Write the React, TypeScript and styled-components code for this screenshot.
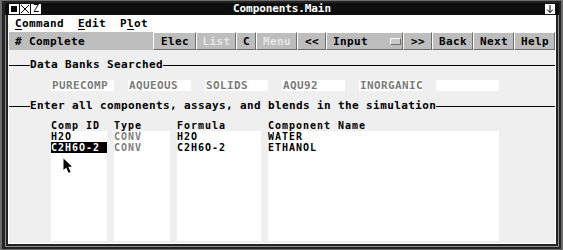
import styled, { createGlobalStyle } from "styled-components";

const MONO = `"DejaVu Sans Mono", "Liberation Mono", monospace`;

const GlobalStyle = createGlobalStyle`
  html, body { margin: 0; padding: 0; background: #ffffff; }
  body { font-family: ${MONO}; }
`;

const Window = styled.div`
  position: relative;
  box-sizing: border-box;
  width: 563px;
  height: 250px;
  display: flex;
  flex-direction: column;
  background: #232323;
  border: 2px solid #6c6c6c;
  border-top-width: 1px;
  border-bottom-width: 1px;
  padding: 2px 2px 2px 3px;
  font-family: ${MONO};
  font-weight: bold;
  font-size: 11px;
  letter-spacing: 0.38px;
  color: #000;
`;

const TitleBar = styled.div`
  height: 12px;
  background: #0e0e0e;
  display: grid;
  grid-template-columns: 1fr auto 1fr;
  align-items: center;
  padding: 0 4px;
`;

const TitleIcons = styled.div`
  display: flex;
  gap: 1px;
`;

const TitleIcon = styled.div`
  width: 10px;
  height: 10px;
  background: #ffffff;
  display: flex;
  align-items: center;
  justify-content: center;
  color: #000;
  font-size: 10px;
  line-height: 10px;
  letter-spacing: 0;
  font-weight: normal;
`;

const TitleText = styled.div`
  color: #ffffff;
  letter-spacing: -0.1px;
  line-height: 12px;
`;

const TitleRight = styled.div`
  display: flex;
  justify-content: flex-end;
`;

const Body = styled.div`
  flex: 1;
  display: flex;
  flex-direction: column;
  border: 1px solid #8c8c8c;
  border-top: none;
  padding: 0 2px 2px 2px;
  min-height: 0;
`;

const Client = styled.div`
  flex: 1;
  display: flex;
  flex-direction: column;
  border: 1px solid #ffffff;
  border-top: none;
  background: #efefef;
  min-height: 0;
`;

const MenuBar = styled.div`
  height: 17px;
  background: #ffffff;
  display: flex;
  align-items: center;
  gap: 14px;
  padding-left: 6px;
`;

const MenuItem = styled.span`
  line-height: 12px;
  u {
    text-decoration: underline;
    text-underline-offset: 2px;
    text-decoration-thickness: 1px;
  }
`;

const Toolbar = styled.div`
  height: 18px;
  box-sizing: border-box;
  background: #bdbdbd;
  display: flex;
  align-items: stretch;
`;

const ToolLabel = styled.div`
  flex: 1;
  padding-left: 6px;
  display: flex;
  align-items: center;
`;

const ToolButton = styled.div<{ $w: number; $disabled?: boolean; $left?: boolean }>`
  box-sizing: border-box;
  width: ${(p) => p.$w}px;
  display: flex;
  align-items: center;
  justify-content: ${(p) => (p.$left ? "space-between" : "center")};
  padding: ${(p) => (p.$left ? "0 1px 0 6px" : "0 0 0 1px")};
  border-top: 1px solid #ffffff;
  border-left: 1px solid #ffffff;
  border-right: 1px solid #6e6e6e;
  border-bottom: 1px solid #6e6e6e;
  color: ${(p) => (p.$disabled ? "#e6e6e6" : "#000")};
`;

const OptionMark = styled.span`
  width: 11px;
  height: 7px;
  box-sizing: border-box;
  border-top: 1px solid #ffffff;
  border-left: 1px solid #ffffff;
  border-right: 1px solid #6e6e6e;
  border-bottom: 1px solid #6e6e6e;
  background: #c8c8c8;
`;

const Content = styled.div`
  position: relative;
  flex: 1;
  display: flex;
  flex-direction: column;
  min-height: 0;
`;

const Rule = styled.div<{ $top: number }>`
  display: flex;
  align-items: center;
  height: 12px;
  margin-top: ${(p) => p.$top}px;
  &::before {
    content: "";
    width: 21px;
    height: 1px;
    background: #000;
  }
  &::after {
    content: "";
    flex: 1;
    height: 1px;
    background: #000;
  }
`;

const RuleText = styled.span`
  line-height: 12px;
`;

const BankRow = styled.div`
  display: flex;
  gap: 14px;
  margin: 9px 0 0 42px;
`;

const BankBox = styled.div`
  width: 63px;
  height: 11px;
  line-height: 11px;
  padding-left: 1px;
  box-sizing: border-box;
  background: #ffffff;
  color: #7b7b7b;
`;

const Table = styled.div`
  flex: 1;
  display: flex;
  gap: 7px;
  margin: 8px 0 2px 42px;
  min-height: 0;
  font-size: 10px;
  letter-spacing: 0.98px;
`;

const Column = styled.div<{ $w: number }>`
  width: ${(p) => p.$w}px;
  display: flex;
  flex-direction: column;
`;

const ColHead = styled.div`
  height: 11px;
  line-height: 11px;
  white-space: nowrap;
`;

const Cells = styled.div`
  flex: 1;
  background: #ffffff;
`;

const Cell = styled.div<{ $selected?: boolean; $muted?: boolean }>`
  height: 11px;
  line-height: 11px;
  white-space: nowrap;
  background: ${(p) => (p.$selected ? "#000" : "transparent")};
  color: ${(p) => (p.$selected ? "#fff" : p.$muted ? "#808080" : "#000")};
`;

const Pointer = styled.svg`
  position: absolute;
  left: 54px;
  top: 108px;
`;

const banks = ["PURECOMP", "AQUEOUS", "SOLIDS", "AQU92", "INORGANIC", ""];

const columns = [
  { title: "Comp ID", w: 56, rows: ["H2O", "C2H6O-2"], muted: false },
  { title: "Type", w: 56, rows: ["CONV", "CONV"], muted: true },
  { title: "Formula", w: 84, rows: ["H2O", "C2H6O-2"], muted: false },
  { title: "Component Name", w: 231, rows: ["WATER", "ETHANOL"], muted: false },
];

const buttons = [
  { label: "Elec", w: 43 },
  { label: "List", w: 40, disabled: true },
  { label: "C", w: 20 },
  { label: "Menu", w: 41, disabled: true },
  { label: "<<", w: 29 },
  { label: "Input", w: 77, option: true },
  { label: ">>", w: 29 },
  { label: "Back", w: 41 },
  { label: "Next", w: 41 },
  { label: "Help", w: 41 },
];

export default function App() {
  return (
    <>
      <GlobalStyle />
      <Window>
        <TitleBar>
          <TitleIcons>
            <TitleIcon>
              <svg width="10" height="10" viewBox="0 0 10 10">
                <rect x="2" y="2" width="6" height="6" fill="#000" />
              </svg>
            </TitleIcon>
            <TitleIcon>
              <svg width="10" height="10" viewBox="0 0 10 10">
                <path d="M1 1 L9 9 M9 1 L1 9" stroke="#000" strokeWidth="1" fill="none" />
              </svg>
            </TitleIcon>
            <TitleIcon>Z</TitleIcon>
          </TitleIcons>
          <TitleText>Components.Main</TitleText>
          <TitleRight>
            <TitleIcon>
              <svg width="10" height="10" viewBox="0 0 10 10">
                <path d="M5 1 V8.5 M2 5.5 L5 8.5 L8 5.5" stroke="#000" strokeWidth="1" fill="none" />
              </svg>
            </TitleIcon>
          </TitleRight>
        </TitleBar>
        <Body>
          <Client>
            <MenuBar>
              <MenuItem><u>C</u>ommand</MenuItem>
              <MenuItem><u>E</u>dit</MenuItem>
              <MenuItem>P<u>l</u>ot</MenuItem>
            </MenuBar>
            <Toolbar>
              <ToolLabel># Complete</ToolLabel>
              {buttons.map((b) => (
                <ToolButton key={b.label} $w={b.w} $disabled={b.disabled} $left={b.option}>
                  {b.label}
                  {b.option && <OptionMark />}
                </ToolButton>
              ))}
            </Toolbar>
            <Content>
              <Rule $top={9}>
                <RuleText>Data Banks Searched</RuleText>
              </Rule>
              <BankRow>
                {banks.map((b, i) => (
                  <BankBox key={i}>{b}</BankBox>
                ))}
              </BankRow>
              <Rule $top={9}>
                <RuleText>Enter all components, assays, and blends in the simulation</RuleText>
              </Rule>
              <Table>
                {columns.map((c, ci) => (
                  <Column key={c.title} $w={c.w}>
                    <ColHead>{c.title}</ColHead>
                    <Cells>
                      {c.rows.map((r, ri) => (
                        <Cell key={ri} $muted={c.muted} $selected={ci === 0 && ri === 1}>
                          {r}
                        </Cell>
                      ))}
                    </Cells>
                  </Column>
                ))}
              </Table>
              <Pointer width="11" height="16" viewBox="0 0 11 16">
                <path d="M0.5 0.5 L0.5 12 L3.2 9.4 L5.6 14.8 L7.6 13.9 L5.3 8.7 L9 8.7 Z" fill="#000" />
              </Pointer>
            </Content>
          </Client>
        </Body>
      </Window>
    </>
  );
}
